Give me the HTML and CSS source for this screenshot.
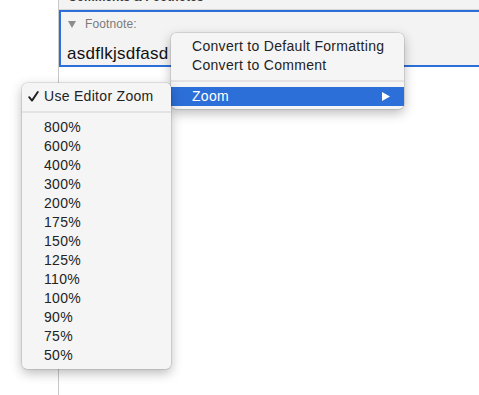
FILE: index.html
```html
<!DOCTYPE html>
<html lang="en">
<head>
    <meta charset="UTF-8">
    <title>Footnote Zoom Menu</title>
    <link rel="stylesheet" href="styles.css">
</head>
<body>

    <div class="page">
        <div class="gutter"></div>

        <div class="panel">
            <div class="panel-header"><span>Comments &amp; Footnotes</span></div>

            <div class="footnote">
                <div class="footnote-label">
                    <svg class="disclosure" width="8" height="7" viewBox="0 0 8 7">
                        <polygon points="0,0 8,0 4,7" fill="#8c8c8c"/>
                    </svg>
                    <span>Footnote:</span>
                </div>
                <div class="footnote-text">asdflkjsdfasd</div>
            </div>
        </div>
    </div>

    <!-- Context menu -->
    <div class="menu context-menu">
        <div class="menu-item">Convert to Default Formatting</div>
        <div class="menu-item">Convert to Comment</div>
        <div class="menu-sep"></div>
        <div class="menu-item selected">
            <span>Zoom</span>
            <svg class="submenu-arrow" width="8" height="9" viewBox="0 0 8 9">
                <polygon points="0,0 8,4.5 0,9" fill="#ffffff"/>
            </svg>
        </div>
    </div>

    <!-- Zoom submenu -->
    <div class="menu zoom-menu">
        <div class="menu-item checked">
            <svg class="check" width="11" height="11" viewBox="0 0 11 11">
                <path d="M1.2 6.2 L4 9.6 L9.8 1" fill="none" stroke="#222" stroke-width="1.9" stroke-linecap="round" stroke-linejoin="round"/>
            </svg>
            Use Editor Zoom
        </div>
        <div class="menu-sep"></div>
        <div class="menu-item">800%</div>
        <div class="menu-item">600%</div>
        <div class="menu-item">400%</div>
        <div class="menu-item">300%</div>
        <div class="menu-item">200%</div>
        <div class="menu-item">175%</div>
        <div class="menu-item">150%</div>
        <div class="menu-item">125%</div>
        <div class="menu-item">110%</div>
        <div class="menu-item">100%</div>
        <div class="menu-item">90%</div>
        <div class="menu-item">75%</div>
        <div class="menu-item">50%</div>
    </div>

</body>
</html>
```

FILE: styles.css
```css
body {
    font-family: 'Liberation Sans', Arial, sans-serif;
    background-color: #ffffff;
    margin: 0;
    padding: 0;
    width: 479px;
    height: 395px;
    overflow: hidden;
    position: relative;
}
.page {
    display: flex;
    height: 395px;
}
.gutter {
    width: 58px;
    flex-shrink: 0;
}
.panel {
    flex: 1;
    border-left: 1px solid #c9c9c9;
    overflow: hidden;
}
.panel-header {
    height: 9px;
    padding-left: 9px;
    background-color: #f3f3f3;
    border-bottom: 1px solid #d6d6d6;
    overflow: hidden;
}
.panel-header span {
    display: block;
    margin-top: -9px;
    line-height: 12px;
    font-size: 12px;
    font-weight: bold;
    color: #3a3a3a;
    white-space: nowrap;
}
.footnote {
    height: 53px;
    border: 2px solid #2c6fd8;
    border-right: none;
    background-color: #f3f3f3;
    padding-left: 6px;
}
.footnote-label {
    display: flex;
    align-items: center;
    gap: 9px;
    margin-top: 5px;
    height: 14px;
    font-size: 12px;
    letter-spacing: 0.1px;
    color: #7a7a7a;
    padding-left: 1px;
}
.footnote-text {
    margin-top: 13px;
    font-size: 17px;
    letter-spacing: 0.25px;
    color: #111111;
    line-height: 20px;
}

/* Menus */
.menu {
    position: absolute;
    background-color: #f5f5f5;
    border-radius: 5px;
    box-shadow: 0 0 0 0.5px rgba(0, 0, 0, 0.18), 0 4px 12px rgba(0, 0, 0, 0.28);
    padding: 4px 0;
    font-size: 14px;
    color: #232323;
}
.context-menu {
    left: 171px;
    top: 33px;
    width: 233px;
    padding-bottom: 3px;
}
.zoom-menu {
    left: 22px;
    top: 83px;
    width: 149px;
}
.menu-item {
    height: 19px;
    line-height: 19px;
    padding-left: 21px;
    letter-spacing: 0.3px;
    white-space: nowrap;
    position: relative;
}
.zoom-menu .menu-item {
    padding-left: 22px;
}
.menu-item.selected {
    background-color: #2c6fd8;
    color: #ffffff;
    display: flex;
    justify-content: space-between;
    align-items: center;
    padding-right: 14px;
}
.check {
    position: absolute;
    left: 6px;
    top: 4px;
}
.menu-sep {
    height: 2px;
    margin: 5px 0;
    background-color: #e3e3e3;
}
```
